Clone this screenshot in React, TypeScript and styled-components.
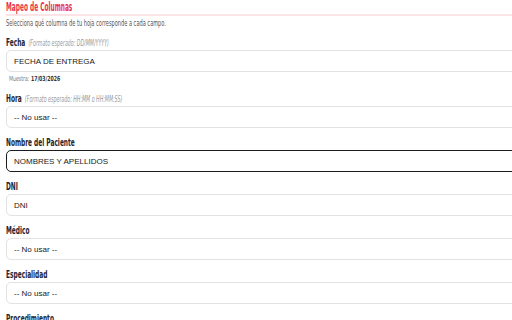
import React from "react";
import styled, { createGlobalStyle } from "styled-components";

const GlobalStyle = createGlobalStyle`
  html, body {
    margin: 0;
    padding: 0;
    background: #ffffff;
    overflow: hidden;
  }
  body {
    font-family: "DejaVu Sans Condensed", "Liberation Sans", sans-serif;
  }
`;

type Field = {
  label: string;
  hint?: string;
  value: string;
  sample?: string;
  focused?: boolean;
};

const fields: Field[] = [
  { label: "Fecha", hint: "(Formato esperado: DD/MM/YYYY)", value: "FECHA DE ENTREGA", sample: "17/03/2026" },
  { label: "Hora", hint: "(Formato esperado: HH:MM o HH:MM:SS)", value: "-- No usar --" },
  { label: "Nombre del Paciente", value: "NOMBRES Y APELLIDOS", focused: true },
  { label: "DNI", value: "DNI" },
  { label: "Médico", value: "-- No usar --" },
  { label: "Especialidad", value: "-- No usar --" },
  { label: "Procedimiento", value: "-- No usar --" },
];

export default function App() {
  return (
    <>
      <GlobalStyle />
      <Panel>
        <Title>
          <Narrow $scale={0.52}>Mapeo de Columnas</Narrow>
        </Title>
        <Intro>
          <Narrow $scale={0.7}>Selecciona qué columna de tu hoja corresponde a cada campo.</Narrow>
        </Intro>
        <FieldList>
          {fields.map((f) => (
            <FieldBlock key={f.label}>
              <Label>
                <Narrow $scale={0.62}>
                  {f.label}
                  {f.hint && <Hint>{f.hint}</Hint>}
                </Narrow>
              </Label>
              <Select $focused={f.focused} value={f.value} onChange={() => {}}>
                <option>{f.value}</option>
              </Select>
              {f.sample && (
                <Sample>
                  <Narrow $scale={0.74}>
                    Muestra: <b>{f.sample}</b>
                  </Narrow>
                </Sample>
              )}
            </FieldBlock>
          ))}
        </FieldList>
      </Panel>
    </>
  );
}

const Panel = styled.div`
  width: 680px;
  padding-left: 6px;
`;

// condensed display face stand-in: squeeze the text horizontally
const Narrow = styled.span<{ $scale: number }>`
  display: inline-block;
  vertical-align: top;
  white-space: nowrap;
  transform: scaleX(${(p) => p.$scale});
  transform-origin: left center;
`;

const Title = styled.h2`
  display: flex;
  height: 14px;
  margin: 0;
  font-size: 12.5px;
  line-height: 13px;
  font-weight: 700;
  color: #e8354d;
  border-bottom: 2px solid #fbe3e6;
`;

const Intro = styled.p`
  display: flex;
  height: 10px;
  margin: 3px 0 0 0;
  font-size: 8px;
  line-height: 10px;
  color: #555;
`;

const FieldList = styled.div`
  display: flex;
  flex-direction: column;
  gap: 8px;
  margin-top: 7px;
`;

const FieldBlock = styled.div`
  display: flex;
  flex-direction: column;
`;

const Label = styled.label`
  display: flex;
  height: 12px;
  font-size: 10.5px;
  line-height: 12px;
  font-weight: 700;
  color: #1d2533;
  margin-bottom: 2px;
`;

const Hint = styled.span`
  font-size: 8.5px;
  font-weight: 400;
  font-style: italic;
  color: #9a9a9a;
  margin-left: 5px;
`;

const Select = styled.select<{ $focused?: boolean }>`
  appearance: none;
  -webkit-appearance: none;
  box-sizing: border-box;
  width: 100%;
  height: 22px;
  padding: 0 7px;
  font-family: "Liberation Sans", Arial, sans-serif;
  font-size: 8px;
  color: #1a1a1a;
  background: #ffffff;
  border: ${(p) => (p.$focused ? "1.5px solid #1c1c1c" : "1px solid #e2e2e2")};
  border-radius: 5px;
  outline: none;
`;

const Sample = styled.div`
  display: flex;
  height: 9px;
  margin-top: 3px;
  padding-left: 3px;
  font-size: 7px;
  line-height: 9px;
  color: #777;

  b {
    color: #333;
    font-weight: 700;
  }
`;
